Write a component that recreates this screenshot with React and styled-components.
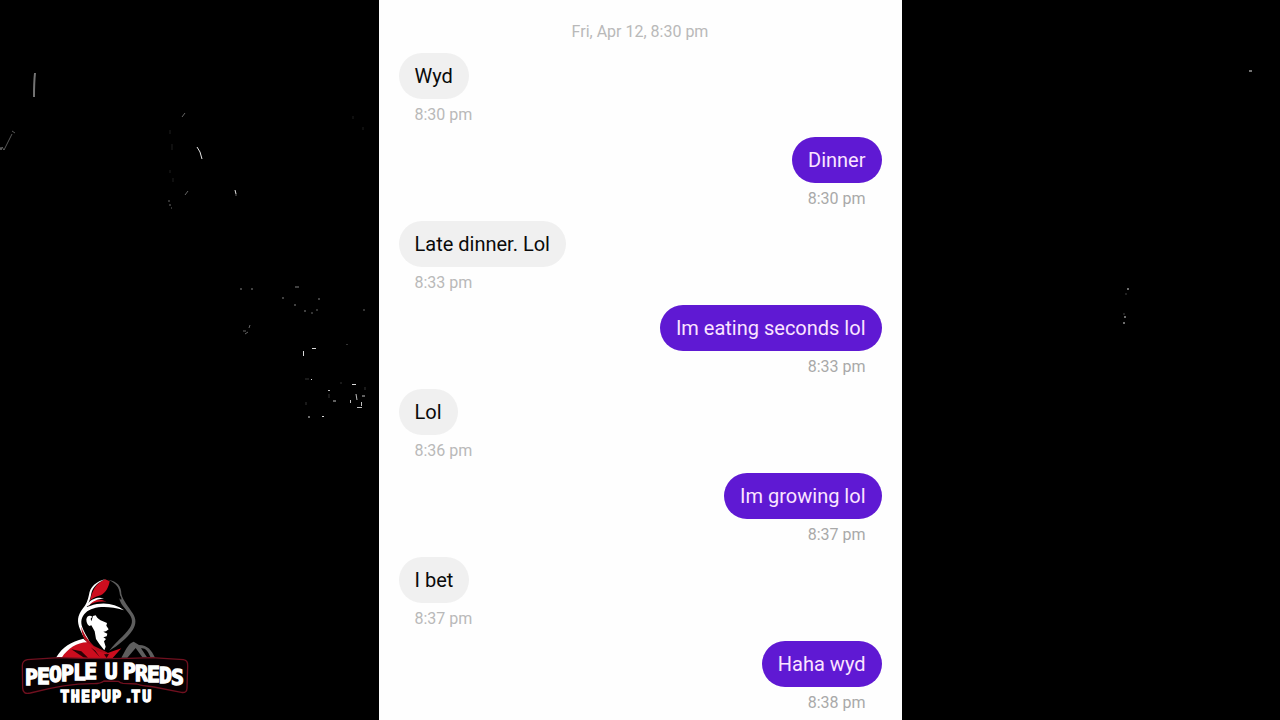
import React from 'react';
import styled, { createGlobalStyle } from 'styled-components';

const GlobalStyle = createGlobalStyle`
	* {
		box-sizing: border-box;
	}
	body {
		margin: 0;
		background: #000;
		font-family: Roboto, 'Liberation Sans', sans-serif;
	}
`;

const Page = styled.div`
	display: flex;
	justify-content: center;
	height: 100vh;
	overflow: hidden;
	background: #000;
`;

const Side = styled.aside`
	position: relative;
	flex: 1 1 0;
	min-width: 0;
	display: flex;
	flex-direction: column;
	justify-content: flex-end;
	align-items: flex-start;
	padding: 10px;
	overflow: hidden;
`;

const Specks = styled.svg`
	position: absolute;
	top: 0;
	left: 0;
	fill: none;
	stroke: #fff;
	stroke-width: 1;
`;

const LogoSvg = styled.svg`
	position: relative;
	display: block;
	width: 190px;
	height: 140px;
`;

const LogoText = styled.text`
	font-family: 'DejaVu Sans Mono', monospace;
	font-weight: 700;
	font-size: ${(props) => props.$size}px;
	fill: #fff;
	stroke: #fff;
	stroke-width: 4;
`;

const Chat = styled.main`
	flex: 0 1 523px;
	background: #fefefe;
	padding: 20px 20px 0;
	overflow: hidden;
`;

const DateLine = styled.h1`
	margin: 0 0 10px;
	font-size: 16px;
	line-height: 23px;
	font-weight: 400;
	text-align: center;
	color: #b9b9b9;
`;

const Messages = styled.ol`
	list-style: none;
	margin: 0;
	padding: 0;
`;

const Message = styled.li`
	display: flex;
	flex-direction: column;
	align-items: ${(props) => (props.$mine ? 'flex-end' : 'flex-start')};
	height: 84px;
`;

const Bubble = styled.p`
	margin: 0;
	padding: 11px 16px;
	border-radius: 23px;
	font-size: 20px;
	line-height: 24px;
	color: ${(props) => (props.$mine ? '#fbe4ff' : '#0a0a0a')};
	background: ${(props) => (props.$mine ? '#5f19d3' : '#f0f0f0')};
`;

const Time = styled.time`
	padding: 5px 16px 0;
	font-size: 16px;
	line-height: 22px;
	color: ${(props) => (props.$mine ? '#a9a9a9' : '#b9b9b9')};
`;

const messages = [
	{ text: 'Wyd', time: '8:30 pm' },
	{ text: 'Dinner', time: '8:30 pm', mine: true },
	{ text: 'Late dinner. Lol', time: '8:33 pm' },
	{ text: 'Im eating seconds lol', time: '8:33 pm', mine: true },
	{ text: 'Lol', time: '8:36 pm' },
	{ text: 'Im growing lol', time: '8:37 pm', mine: true },
	{ text: 'I bet', time: '8:37 pm' },
	{ text: 'Haha wyd', time: '8:38 pm', mine: true },
];

const Logo = () => (
	<LogoSvg viewBox='0 0 570 420' role='img' aria-label='People U Preds'>
		{/* hood */}
		<path fill='#cc0d1e' d='M242 84 C250 54 264 36 286 28 L299 34 C296 52 288 68 272 76 C262 78 252 82 238 92 Z' />
		<path fill='#cc0d1e' d='M236 102 C246 90 258 88 276 90 L290 95 C268 93 250 97 232 108 Z' />
		<path fill='#fff' d='M288 26 C258 34 240 50 237 74 C234 90 228 104 219 115 C201 138 201 155 210 178 C219 201 232 218 250 240 C240 212 224 192 217 172 C211 155 214 140 227 128 C248 109 290 105 342 121 C314 100 278 95 240 108 C236 109 233 110 230 111 C238 95 242 84 244 70 C248 50 266 36 288 26 Z' />
		<path fill='#fff' d='M226 110 C242 86 262 80 282 85 C260 88 248 94 238 106 Z' />
		<path fill='#5e5e5e' d='M294 29 C322 34 334 48 334 72 C340 94 356 110 368 130 C380 148 378 164 368 180 C350 206 325 226 298 242 C318 216 342 198 359 174 C370 158 367 144 356 130 C344 112 330 102 328 84 C334 94 338 88 330 76 C328 50 318 40 294 29 Z' />
		<path fill='#b30d1b' d='M214 170 C222 196 238 214 252 228 L294 248 L282 252 L250 242 C228 218 214 198 214 170 Z' />
		{/* face */}
		<path fill='#fff' d='M229 148 C231 137 240 135 247 140 L242 146 L244 154 L249 138 L257 136 C262 146 270 151 277 153 L291 159 L289 167 L296 178 L288 184 L280 185 L292 191 L290 199 L280 202 L288 207 L282 214 L287 230 L283 241 L268 222 L258 207 L254 184 L244 166 L238 168 C231 164 229 156 229 148 Z' />
		{/* shoulders */}
		<path fill='#cc0d1e' d='M152 264 C168 239 194 218 226 214 L248 228 L262 244 L291 250 L310 243 L334 235 L308 264 Z' />
		<path fill='#2a0206' d='M184 238 L214 244 L234 263 L220 262 Z M242 232 L256 242 L270 262 Z M282 253 L297 252 L290 264 Z' />
		<path fill='#fff' d='M138 263 C157 230 184 215 220 206 L231 217 C201 217 173 236 155 263 Z' />
		<path fill='#5e5e5e' d='M334 263 C346 244 353 220 371 215 L387 225 C414 226 424 240 435 263 L421 261 C414 242 405 233 393 235 L411 262 L397 262 L377 234 L352 263 Z' />
		{/* name plate */}
		<path
			fill='#070002'
			stroke='#70101f'
			strokeWidth='4'
			d='M52 269 L146 263 C240 267 335 267 425 263 L520 269 Q534 271 533 287 L531 354 Q531 370 514 367 L432 351 C410 347 394 348 380 342 L339 340 Q330 339 325 334 L282 333 Q272 341 252 341 C190 340 130 351 61 369 Q38 374 38 354 L37 287 Q37 272 52 269 Z'
		/>
		<LogoText
			$size={64}
			x='45 81 117 153 189 223 262 284 320 339 375 411 447 483'
			y='346 341 337 333 330 328 327 327 327 328 332 336 340 345'
		>
			PEOPLE U PREDS
		</LogoText>
		<LogoText $size={45} x='151 182 213 244 275 306 342 364 397' y='395'>THEPUP.TU</LogoText>
	</LogoSvg>
);

const App = () => (
	<>
		<GlobalStyle />
		<Page>
			<Side>
				<Specks width='378' height='440' aria-hidden='true'>
					<path opacity='0.45' strokeWidth='2' d='M35 73 C34 82 34 90 34 97' />
					<path opacity='0.35' d='M0 147 L1 150 L2 147 L4 150 L12 134 M12 131 L15 133' />
					<path opacity='0.4' d='M182 117 L185 113 M185 195 L188 191' />
					<path opacity='0.12' d='M170 130 V134 M172 144 V150 M170 170 V173 M173 178 V182 M353 116 V119 M363 127 V130' />
					<path opacity='0.9' d='M197 147 L200 152 L202 159 M235 190 L236 194' />
					<path opacity='0.4' d='M168 201 H170 M170 204 V206 M171 208 H172 M236 194 V196' />
					<path opacity='0.5' d='M240 289 H242 M251 289 H253 M283 297 V299 M295 287 H299 M294 305 H296 M304 311 H306 M319 298 V300' />
					<path opacity='0.4' d='M249 328 L250 325 M243 331 H246 M245 334 L248 332 M312 312 V314 M317 309 V311 M364 309 V311' />
					<path opacity='0.85' d='M312 348.5 H316 M303.5 351 V356 M352 384.5 H356 M311 379.5 H312 M308 417 H310 M322 416.5 H324' />
					<path opacity='0.75' d='M350.5 400 V403 M356 394 L357 400 M362 396 H365 M361.5 402 V406 M357 407.5 H362 M328 390.5 H330 M333 401 H336' />
					<path opacity='0.2' d='M305 379 H309 M306 402 V405 M346 344.5 H348 M340 383 H342 M365 387 V390 M329 394 V398' />
				</Specks>
				<Logo />
			</Side>
			<Chat>
				<DateLine>Fri, Apr 12, 8:30 pm</DateLine>
				<Messages>
					{messages.map((msg, i) => (
						<Message key={i} $mine={msg.mine}>
							<Bubble $mine={msg.mine}>{msg.text}</Bubble>
							<Time $mine={msg.mine}>{msg.time}</Time>
						</Message>
					))}
				</Messages>
			</Chat>
			<Side>
				<Specks width='378' height='440' aria-hidden='true'>
					<path opacity='0.45' strokeWidth='2' d='M347 71 H350' />
					<path opacity='0.85' d='M226 288 V290 M223 316 V318 M222 322 V324' />
					<path opacity='0.25' d='M224 293 V295 M222 313 V315' />
				</Specks>
			</Side>
		</Page>
	</>
);

export default App;
